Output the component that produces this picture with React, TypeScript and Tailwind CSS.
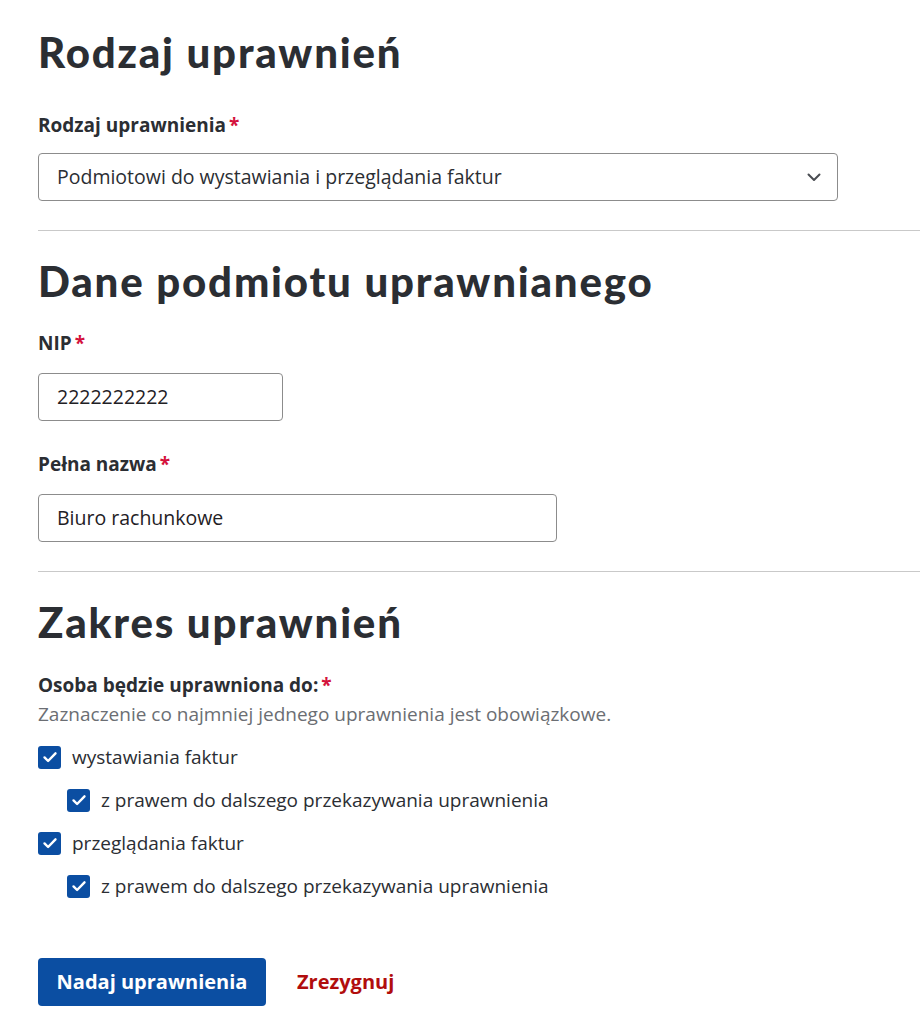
import { useState } from "react";

const headingFont = { fontFamily: '"Lato", "Inter", sans-serif' };

function Label({ text }: { text: string }) {
  return (
    <div className="text-[19px] leading-[24px] font-bold text-[#2b2e33]">
      {text}
      <span className="ml-[3px] text-[#d4123c]">*</span>
    </div>
  );
}

function Check({
  checked,
  onChange,
  label,
  indent,
}: {
  checked: boolean;
  onChange: () => void;
  label: string;
  indent?: boolean;
}) {
  return (
    <label className={`flex h-[24px] cursor-pointer items-center gap-[11px] ${indent ? "ml-[29px]" : ""}`}>
      <span
        onClick={onChange}
        className={`flex h-[23px] w-[23px] shrink-0 items-center justify-center rounded-[3px] ${
          checked ? "bg-[#0b4ea2]" : "border border-[#8a8a8a] bg-white"
        }`}
      >
        {checked && (
          <svg width="16" height="16" viewBox="0 0 16 16" fill="none">
            <path d="M2.5 8.4l3.6 3.6L13.5 4.3" stroke="white" strokeWidth="2.4" strokeLinecap="round" strokeLinejoin="round" />
          </svg>
        )}
      </span>
      <span className="text-[19px] leading-[24px] text-[#2b2e33]">{label}</span>
    </label>
  );
}

export default function App() {
  const [checks, setChecks] = useState([true, true, true, true]);
  const toggle = (i: number) => setChecks(c => c.map((v, j) => (j === i ? !v : v)));

  return (
    <div className="min-h-[1029px] bg-white pl-[38px] pt-[28px]" style={{ fontFamily: '"Open Sans", "Noto Sans", sans-serif' }}>
      <h1 className="text-[42px] leading-[48px] font-black tracking-[1.8px] text-[#2b2e33]" style={headingFont}>
        Rodzaj uprawnień
      </h1>

      <div className="mt-[37px]">
        <Label text="Rodzaj uprawnienia" />
      </div>
      <div className="mt-[16px] flex h-[48px] w-[800px] items-center justify-between rounded-[4px] border border-[#8c8c8c] pl-[18px] pr-[16px]">
        <span className="text-[19.5px] text-[#2b2e33]">Podmiotowi do wystawiania i przeglądania faktur</span>
        <svg width="14" height="9" viewBox="0 0 14 9" fill="none">
          <path d="M1.5 1.5L7 7l5.5-5.5" stroke="#4a4d52" strokeWidth="2" strokeLinecap="round" strokeLinejoin="round" />
        </svg>
      </div>

      <hr className="mt-[29px] border-t border-[#c9c9c9]" />

      <h2 className="mt-[26px] text-[42px] leading-[48px] font-black tracking-[1.8px] text-[#2b2e33]" style={headingFont}>
        Dane podmiotu uprawnianego
      </h2>

      <div className="mt-[26px]">
        <Label text="NIP" />
      </div>
      <div className="mt-[18px] flex h-[48px] w-[245px] items-center rounded-[4px] border border-[#8c8c8c] pl-[18px]">
        <span className="text-[19.5px] text-[#1f2125]">2222222222</span>
      </div>

      <div className="mt-[31px]">
        <Label text="Pełna nazwa" />
      </div>
      <div className="mt-[18px] flex h-[48px] w-[519px] items-center rounded-[4px] border border-[#8c8c8c] pl-[18px]">
        <span className="text-[19.5px] text-[#1f2125]">Biuro rachunkowe</span>
      </div>

      <hr className="mt-[29px] border-t border-[#c9c9c9]" />

      <h2 className="mt-[26px] text-[42px] leading-[48px] font-black tracking-[1.8px] text-[#2b2e33]" style={headingFont}>
        Zakres uprawnień
      </h2>

      <div className="mt-[27px]">
        <Label text="Osoba będzie uprawniona do:" />
      </div>
      <p className="mt-[5px] text-[19px] leading-[24px] text-[#6b6e73]">
        Zaznaczenie co najmniej jednego uprawnienia jest obowiązkowe.
      </p>

      <div className="mt-[19px] flex flex-col gap-[19px]">
        <Check checked={checks[0]} onChange={() => toggle(0)} label="wystawiania faktur" />
        <Check checked={checks[1]} onChange={() => toggle(1)} label="z prawem do dalszego przekazywania uprawnienia" indent />
        <Check checked={checks[2]} onChange={() => toggle(2)} label="przeglądania faktur" />
        <Check checked={checks[3]} onChange={() => toggle(3)} label="z prawem do dalszego przekazywania uprawnienia" indent />
      </div>

      <div className="mt-[60px] flex items-center gap-[31px]">
        <button className="h-[48px] w-[228px] rounded-[4px] bg-[#0b4ea2] text-[20px] font-bold text-white">
          Nadaj uprawnienia
        </button>
        <button className="text-[20px] font-bold text-[#b10d0d]">Zrezygnuj</button>
      </div>
    </div>
  );
}
